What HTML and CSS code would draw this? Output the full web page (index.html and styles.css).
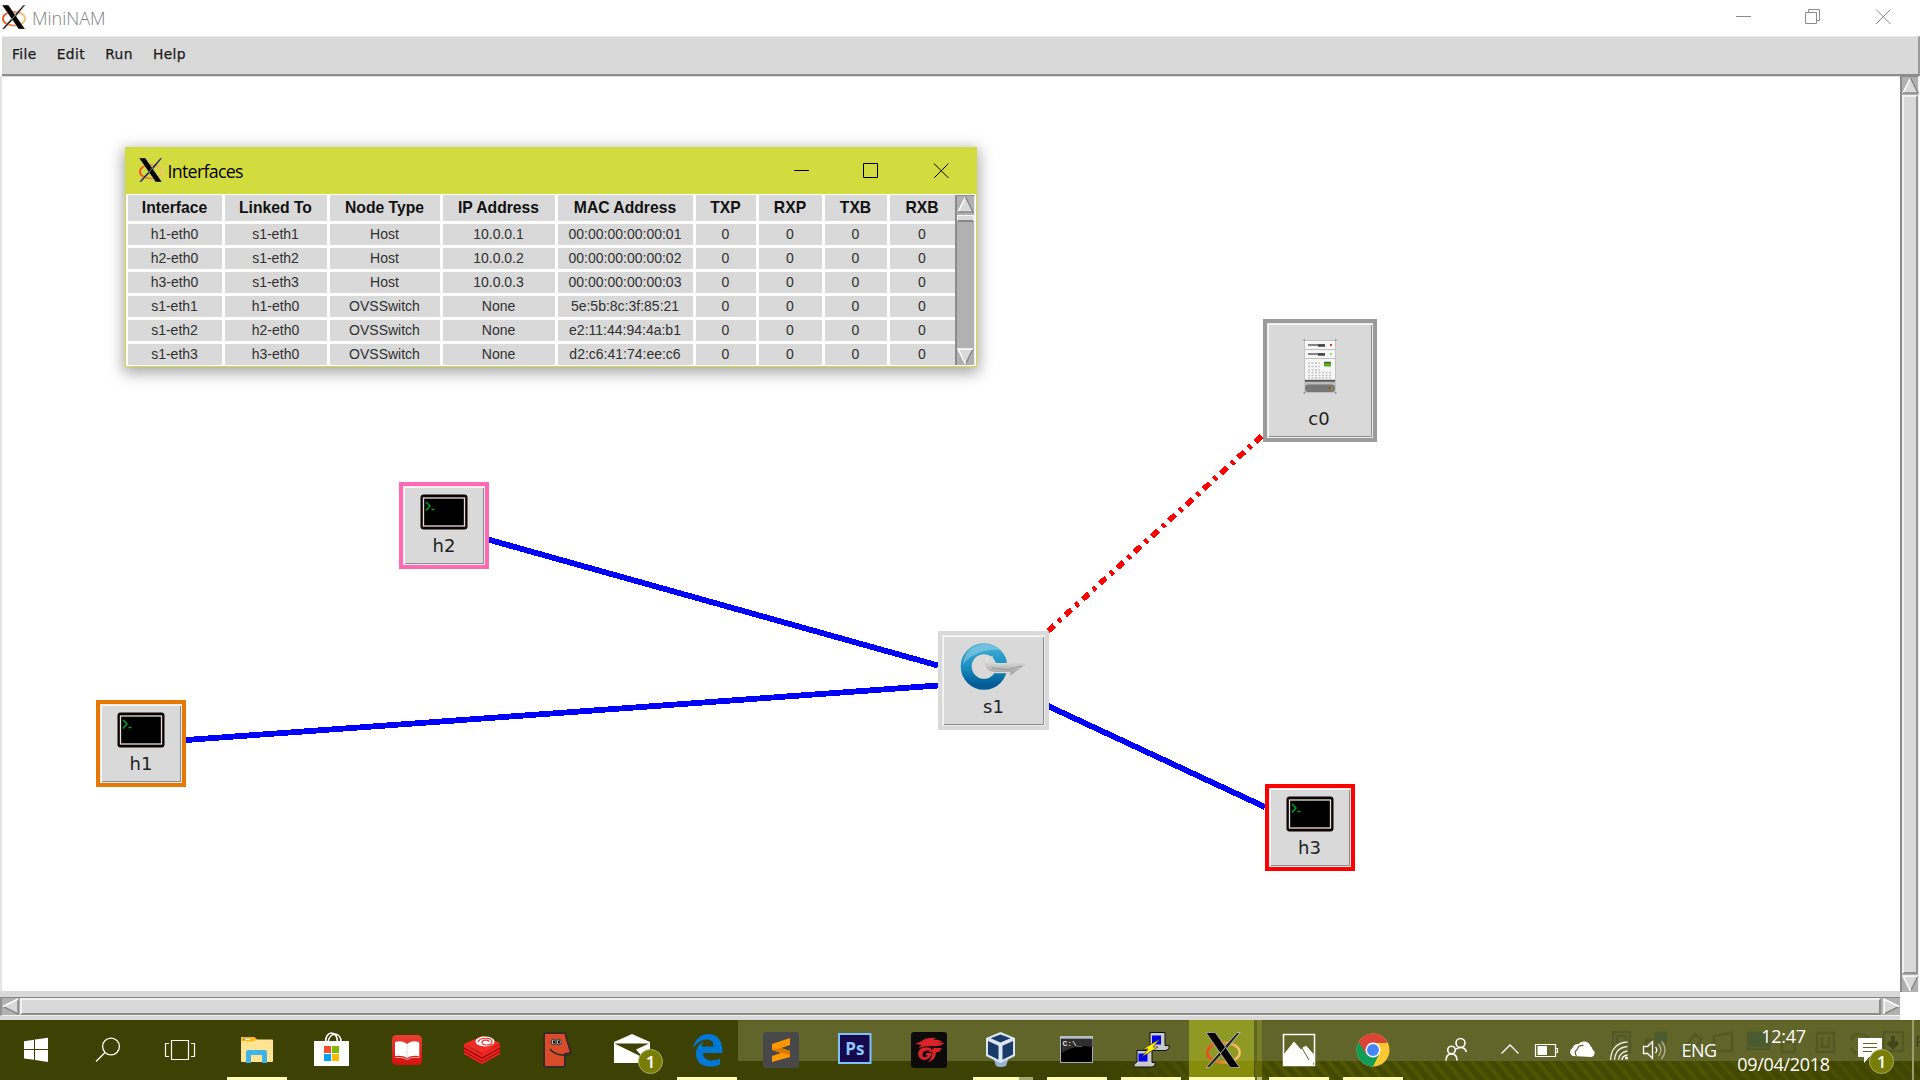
FILE: index.html
```html
<!DOCTYPE html>
<html lang="en">
<head>
<meta charset="utf-8">
<title>MiniNAM</title>
<link rel="stylesheet" href="styles.css">
</head>
<body>
<svg class="defs" width="0" height="0">
  <defs>
    <linearGradient id="ring" x1="0" y1="0" x2="1" y2="0"><stop offset="0" stop-color="#f04a1c"/><stop offset="1" stop-color="#f3c56a"/></linearGradient>
    <linearGradient id="blue" x1="0" y1="0" x2="0" y2="1"><stop offset="0" stop-color="#3ba9d2"/><stop offset=".5" stop-color="#1a8fc0"/><stop offset="1" stop-color="#035c97"/></linearGradient>
    <linearGradient id="silver" x1="0" y1="0" x2="0" y2="1"><stop offset="0" stop-color="#f5f5f5"/><stop offset="1" stop-color="#8f8f8f"/></linearGradient>
    <linearGradient id="redapp" x1="0" y1="0" x2="0" y2="1"><stop offset="0" stop-color="#ea3f33"/><stop offset="1" stop-color="#d5120f"/></linearGradient>
    <symbol id="xlogo" viewBox="0 0 36 36">
      <ellipse cx="18" cy="20.500" rx="16.600" ry="10.300" fill="none" stroke="url(#ring)" stroke-width="2.600"/>
      <path d="M32 0h3L19.500 19l-2 2L3.500 36H0l15-17z" fill="#222" stroke="#ddd" stroke-width=".7"/>
      <path d="M0 0h9.500L34.500 36H25z" fill="#000" stroke="#ddd" stroke-width=".6"/>
      <path d="M20.500 14.500l-6 7.500" stroke="#ddd" stroke-width=".8"/>
    </symbol>
    <symbol id="terminal" viewBox="0 0 48 36">
      <rect x=".5" y=".5" width="47" height="35" rx="3" fill="#0b0303"/>
      <rect x="3.500" y="4" width="41" height="28" fill="#000" stroke="#eadede" stroke-width="1.300"/>
      <path d="M6 8l4 4-4 4.500M11.500 15.500h3" fill="none" stroke="#00a51b" stroke-width="1.500"/>
    </symbol>
  </defs>
</svg>
<div class="screen">
  <header class="titlebar">
    <svg class="logo" width="24" height="24"><use href="#xlogo"/></svg>
    <span class="app-name">MiniNAM</span>
    <svg class="controls" width="154" height="36" fill="none" stroke="#8c8c8c">
      <path d="M0 16.500h15M69.500 12.500h11v11h-11zM72.500 12v-2.500h11v11h-2.500M140 9.500l14.500 14.500M154.500 9.500L140 24"/>
    </svg>
  </header>
  <nav class="menubar"><span>File</span><span>Edit</span><span>Run</span><span>Help</span></nav>
  <div class="workspace">
    <main class="canvas">
      <svg class="links" width="1898" height="915" viewBox="2 76 1898 915" fill="none" shape-rendering="crispEdges">
        <path d="M186 740L938 685.500M488 539.500L938 665.500M1048 706L1265 807" stroke="#0000ff" stroke-width="5.800"/>
        <path d="M1048 631L1265 433" stroke="#ff0000" stroke-width="5.500" stroke-dasharray="8.400 5.700 3.600 5.700"/>
      </svg>
      <div class="node h1"><svg width="48" height="36"><use href="#terminal"/></svg><span>h1</span></div>
      <div class="node h2"><svg width="48" height="36"><use href="#terminal"/></svg><span>h2</span></div>
      <div class="node h3"><svg width="48" height="36"><use href="#terminal"/></svg><span>h3</span></div>
      <div class="node s1">
        <svg width="68" height="50" viewBox="959 642 68 50">
          <circle cx="983" cy="666.500" r="17.800" fill="none" stroke="url(#blue)" stroke-width="11"/>
          <path d="M962 664a22 22 0 0 1 20-20c8 0 13 2 17 6-13-1-27 3-37 14z" fill="#fff" opacity=".28"/>
          <path d="M992 657c-8-1-11 6-7 11 3 5 9 5 24 4.500l-1 4.500 19-13-20-4 2 3c-9 1-17 1-20-1-3-1-2-4 3-5z" fill="url(#silver)" stroke="#d9d9d9" stroke-width="1.200"/>
          <path d="M991 668l16 1.500 14-3.500" stroke="#999" fill="none"/>
        </svg>
        <span>s1</span>
      </div>
      <div class="node c0">
        <svg width="34" height="56" viewBox="1303 339 34 56">
          <rect x="1304.500" y="340.500" width="31" height="52" fill="#f6f6f6" stroke="#c4c4c4"/>
          <path d="M1305 349.500h30M1305 358.500h30" stroke="#c2c2c2"/>
          <path d="M1308 345h17M1308 354h17" stroke="#5f5f5f" stroke-width="1.500"/>
          <path d="M1318 345.500h7M1318 354.500h7" stroke="#444" stroke-width="2.500"/>
          <path d="M1330 345h2" stroke="#d33" stroke-width="2"/><path d="M1330 354h2" stroke="#7e4" stroke-width="2"/>
          <path d="M1308 363h12M1308 366.500h12M1308 370h12M1308 372.500h23M1308 375.500h23M1308 378h23" stroke="#c4c4c4" stroke-width="1.600" stroke-dasharray="2 1.500"/>
          <rect x="1324" y="362" width="7" height="4.500" fill="#55b610"/><path d="M1324 362.500h7" stroke="#555" stroke-width="1.500"/>
          <rect x="1305" y="379.800" width="30" height="2" fill="#555"/>
          <rect x="1305" y="382" width="30" height="10.500" fill="#bbb"/>
          <rect x="1305" y="384.500" width="30" height="7.500" rx="3.500" fill="#777"/>
          <path d="M1329 388h3" stroke="#c22" stroke-width="2"/><path d="M1331.500 387v3" stroke="#6b2" stroke-width="1.500"/>
          <path d="M1303.500 340h1.500M1335 340h1.500M1303.500 393h1.500M1335 393h1.500" stroke="#888" stroke-width="1.500"/>
        </svg>
        <span>c0</span>
      </div>

      <section class="window">
        <div class="window-title">
          <svg class="logo" width="24" height="24"><use href="#xlogo"/></svg>
          <span class="window-name">Interfaces</span>
          <svg class="controls" width="156" height="46" fill="none" stroke="#000">
            <path d="M0 22.500h15M69.500 15.500h14v14h-14zM140 15.500l14.500 14.500M154.500 15.500L140 30"/>
          </svg>
        </div>
        <div class="window-body">
          <div class="grid">
            <b>Interface</b><b>Linked To</b><b>Node Type</b><b>IP Address</b><b>MAC Address</b><b>TXP</b><b>RXP</b><b>TXB</b><b>RXB</b>
            <i>h1-eth0</i><i>s1-eth1</i><i>Host</i><i>10.0.0.1</i><i>00:00:00:00:00:01</i><i>0</i><i>0</i><i>0</i><i>0</i>
            <i>h2-eth0</i><i>s1-eth2</i><i>Host</i><i>10.0.0.2</i><i>00:00:00:00:00:02</i><i>0</i><i>0</i><i>0</i><i>0</i>
            <i>h3-eth0</i><i>s1-eth3</i><i>Host</i><i>10.0.0.3</i><i>00:00:00:00:00:03</i><i>0</i><i>0</i><i>0</i><i>0</i>
            <i>s1-eth1</i><i>h1-eth0</i><i>OVSSwitch</i><i>None</i><i>5e:5b:8c:3f:85:21</i><i>0</i><i>0</i><i>0</i><i>0</i>
            <i>s1-eth2</i><i>h2-eth0</i><i>OVSSwitch</i><i>None</i><i>e2:11:44:94:4a:b1</i><i>0</i><i>0</i><i>0</i><i>0</i>
            <i>s1-eth3</i><i>h3-eth0</i><i>OVSSwitch</i><i>None</i><i>d2:c6:41:74:ee:c6</i><i>0</i><i>0</i><i>0</i><i>0</i>
          </div>
          <div class="table-scroll">
            <svg width="17" height="17"><path d="M8.500 1L16 16H1z" fill="#d9d9d9"/><path d="M8.500 1L1 16" stroke="#fff" stroke-width="1.500"/><path d="M8.500 1L16 16H1" fill="none" stroke="#888" stroke-width="1.500"/></svg>
            <div class="table-thumb"></div>
            <svg width="17" height="17"><path d="M1 1h15L8.500 16z" fill="#d9d9d9"/><path d="M16 1L8.500 16" stroke="#888" stroke-width="1.500"/><path d="M16 1H1l7.500 15" fill="none" stroke="#fff" stroke-width="1.500"/></svg>
          </div>
        </div>
      </section>
    </main>
    <div class="vscroll">
      <svg width="17" height="17"><path d="M8.500 1L16 16H1z" fill="#d9d9d9"/><path d="M8.500 1L1 16" stroke="#fff" stroke-width="1.500"/><path d="M8.500 1L16 16H1" fill="none" stroke="#888" stroke-width="1.500"/></svg>
      <div class="thumb"></div>
      <svg width="17" height="17"><path d="M1 1h15L8.500 16z" fill="#d9d9d9"/><path d="M16 1L8.500 16" stroke="#888" stroke-width="1.500"/><path d="M16 1H1l7.500 15" fill="none" stroke="#fff" stroke-width="1.500"/></svg>
    </div>
  </div>
  <div class="hscroll-area">
    <div class="hscroll">
      <svg width="17" height="17"><path d="M1 8.500L16 1v15z" fill="#d9d9d9"/><path d="M16 1v15L1 8.500" fill="none" stroke="#888" stroke-width="1.500"/><path d="M1 8.500L16 1" stroke="#fff" stroke-width="1.500"/></svg>
      <div class="thumb"></div>
      <svg width="17" height="17"><path d="M16 8.500L1 1v15z" fill="#d9d9d9"/><path d="M16 8.500L1 16" stroke="#888" stroke-width="1.500"/><path d="M1 16V1l15 7.500" fill="none" stroke="#fff" stroke-width="1.500"/></svg>
    </div>
  </div>

  <footer class="taskbar">
    <svg class="task" width="72" height="60" viewBox="0 1020 72 60" fill="#fff"><path d="M24 1041.200l10-1.400v9.200H24zM35 1039.600l13-1.800V1049H35zM24 1050h10v9.800l-10-1.400zM35 1050h13v12l-13-1.900z"/></svg>
    <svg class="task" width="72" height="60" viewBox="72 1020 72 60" fill="none" stroke="#fff" stroke-width="1.300"><circle cx="111" cy="1046.500" r="8.400"/><path d="M105 1052.500l-9 9"/></svg>
    <svg class="task" width="76" height="60" viewBox="144 1020 76 60" fill="none" stroke="#fff" stroke-width="1.200"><path d="M171.500 1040.500h17v19h-17zM169 1043.500h-3.500v13h3.500M191 1043.500h3.500v13H191"/></svg>
    <svg class="task open" width="75" height="60" viewBox="220 1020 75 60"><path d="M241 1038q0-1 1-1h12l3 2.500h15q1 0 1 1V1061q0 1-1 1h-30q-1 0-1-1z" fill="#ffe593"/><path d="M241 1041v-3q0-1 1-1h12l2.500 2.500-3 2z" fill="#fbb917"/><path d="M244 1039.500h6" stroke="#fff"/><path d="M243 1039.500h2" stroke="#3a9bd5"/><path d="M246 1063v-11q0-2 2-2h17q2 0 2 2v11h-5v-8h-11v8z" fill="#40b4e8"/></svg>
    <svg class="task" width="75" height="60" viewBox="295 1020 75 60"><path d="M314 1041h35v25h-35z" fill="#fff"/><path d="M325.500 1042c0-12 12-12 12 0M328 1042c2-11 13-10 13 0" fill="none" stroke="#fff" stroke-width="1.600"/><path d="M324 1046h7v7h-7z" fill="#f25022"/><path d="M332 1046h7v7h-7z" fill="#7fba00"/><path d="M324 1054h7v7h-7z" fill="#00a4ef"/><path d="M332 1054h7v7h-7z" fill="#ffb900"/></svg>
    <svg class="task" width="75" height="60" viewBox="370 1020 75 60"><rect x="392" y="1035" width="30" height="30" rx="4.500" fill="url(#redapp)"/><path d="M395 1057.500q8-1 12 2 4-3 12-2v-14" fill="none" stroke="#f4a09a" stroke-width="1"/><path d="M395 1042q8-2 12 2v14q-4-3-12-2zM419 1042q-8-2-12 2v14q4-3 12-2z" fill="#fff"/><path d="M407 1044v14" stroke="#ddd"/></svg>
    <svg class="task" width="75" height="60" viewBox="445 1020 75 60"><path d="M464 1044l14 9 22-9v10l-18 10-18-10z" fill="#b90e0e"/><path d="M464 1044l19-8.500 17 7.500-17 11z" fill="#f12b27"/><path d="M464 1044l18 10.500 18-10.500v3.500l-18 10-18-10zM464 1049l18 10 18-10v5l-18 10-18-10z" fill="#ee2523"/><path d="M464 1048l18 10 18-10M464 1051.500l18 10 18-10" fill="none" stroke="#8d0909"/><ellipse cx="485" cy="1041.500" rx="9.500" ry="5" fill="#fff"/><path d="M478 1042c2-5 14-5 14 0 0 4-11 4-10 0 1-3 8-2 7 0" fill="none" stroke="#f12b27" stroke-width="1.200"/></svg>
    <svg class="task" width="75" height="60" viewBox="520 1020 75 60"><path d="M545 1033h20l6 20-6 1v11q0 2-2 2h-17q-2 0-2-2v-31z" fill="#da4c29" stroke="#302b29" stroke-width="2" stroke-linejoin="round"/><ellipse cx="553.700" cy="1042" rx="2.500" ry="3" fill="#bbb" stroke="#333"/><ellipse cx="558.800" cy="1042" rx="2.500" ry="3" fill="#bbb" stroke="#333"/><path d="M553 1042h2M558 1042h2" stroke="#111" stroke-width="3"/><path d="M550 1049q6 8 20 5.500" fill="none" stroke="#302b29" stroke-width="1.600"/></svg>
    <svg class="task" width="75" height="60" viewBox="595 1020 75 60"><path d="M614 1042l18-8 18 8v21h-36z" fill="#fff"/><path d="M614.500 1043.500H649l-13 6 7 8z" fill="#3d4103"/><circle cx="650.500" cy="1061.500" r="12" fill="#787e05" stroke="#a9ac62"/><text x="650.500" y="1068" class="badge">1</text></svg>
    <svg class="task open" width="74" height="60" viewBox="670 1020 74 60"><path d="M693 1048c2-9 8-14 15.500-14 9 0 14 7 14 17v2H703c0 5 4 7.500 9 7.500 3 0 6-1 8-2v6c-3 1.500-6 2-10 2-9 0-14-5-14-13 0-6 4-10 8-12-1.500 1.500-2 3-2.500 5h12c0-5-2-7-7-7s-9 3-13.500 8.500z" fill="#0078d7"/></svg>
    <svg class="task" width="74" height="60" viewBox="744 1020 74 60"><rect x="763" y="1032" width="36" height="36" rx="2.500" fill="#484848"/><path d="M772 1044l18-6v7l-9 3 9 3v6l-18 5v-6l9-3-9-3z" fill="#ff9800"/><path d="M772 1050l9-2 9 3v4z" fill="#d97700"/></svg>
    <svg class="task" width="74" height="60" viewBox="818 1020 74 60"><rect x="839" y="1034" width="31.500" height="29" fill="#16094c" stroke="#7fc1fb" stroke-width="2"/><text x="854.800" y="1055" class="ps">Ps</text></svg>
    <svg class="task" width="74" height="60" viewBox="892 1020 74 60"><rect x="911" y="1032" width="36" height="36" rx="3" fill="#0c0a0a"/><path d="M915.500 1043q4 0 6-2 6-4 14-3l-2 2q5-1 9 2h-5l7 1q-5 4-12 3-8 0-14 2l3-3q-4 0-6-2z" fill="#d92329"/><path d="M931 1048c-9-3-15 3-12 9 3 5 11 4 13-4h-6v2.500h2c-2 3-6 2-5.500-1.500.500-3 4-4.500 8.500-3z" fill="#d92329"/><path d="M934 1048h8l-3 4h-3q0 8-8 10 4-3 4.500-10h-4z" fill="#d92329"/></svg>
    <svg class="task stacked" width="74" height="60" viewBox="966 1020 74 60"><path d="M993 1057h16l-3 9q-6 2-10 0z" fill="#9ab0d5"/><path d="M1000.500 1032l14.500 6v18l-14.500 7-14.500-7v-18z" fill="#dbe6f2"/><path d="M1000.500 1034.500l10 3.800-10 4.200-10-4.200zM988 1041l10.500 4.800v14l-10.500-5.300zM1013 1041l-10.500 4.800v14l10.500-5.300z" fill="#183b69"/></svg>
    <svg class="task open" width="74" height="60" viewBox="1040 1020 74 60"><rect x="1060.500" y="1036.500" width="32" height="26" fill="#000" stroke="#a9afb8"/><path d="M1060 1037.500h33" stroke="#bbc1ca" stroke-width="2.500"/><path d="M1061.500 1053q14-9 31-6v-8h-31z" fill="#2e2e2e"/><text x="1062.500" y="1046" class="cmd">C:\_</text></svg>
    <svg class="task open" width="74" height="60" viewBox="1114 1020 74 60"><g stroke="#111" fill="#c9c9c9"><path d="M1150 1032.500h15v13h4v3l-3 2h-14v-5h-2zM1137 1050.500h15v12h3v3l-3 1.500h-18v-3l3-2z"/></g><path d="M1152 1035.500h9v9h-9zM1138.500 1053.500h9v8h-9z" fill="#0000ef"/><path d="M1160 1039l-17 10h5l-6 8 16-10h-5z" fill="#ffee00" stroke="#222" stroke-width=".6"/></svg>
    <svg class="task active" width="67" height="60" viewBox="1188 1020 67 60"><use href="#xlogo" x="1206" y="1032" width="35" height="36"/></svg>
    <div class="stack-edge"></div>
    <svg class="task open" width="74" height="60" viewBox="1262 1020 74 60"><rect x="1283.500" y="1034.500" width="31" height="31" fill="none" stroke="#fff" stroke-width="1.500"/><path d="M1284 1054l10-12.500 7 8 3-3 9 13v6h-29z" fill="#fff"/><path d="M1303 1048l3-2.500 8 9v9z" fill="#fff"/><path d="M1302 1048l7 12" stroke="#626529"/></svg>
    <svg class="task open" width="74" height="60" viewBox="1336 1020 74 60"><circle cx="1373" cy="1050" r="16.500" fill="#fcc934"/><path d="M1358.700 1041.800A16.500 16.500 0 0 1 1387.300 1041.800L1373 1043l-6 10z" fill="#db4437"/><path d="M1358.700 1041.800A16.500 16.500 0 0 0 1373 1066.500l6-12-10-2z" fill="#0f9d58"/><path d="M1358.700 1041.800L1366 1054l7-11h14.300l-4-5z" fill="#db4437"/><circle cx="1373" cy="1050" r="7.500" fill="#fff"/><circle cx="1373" cy="1050" r="6" fill="#4587f4"/></svg>

    <div class="tray">
      <svg class="ghosts" width="316" height="40" viewBox="1604 1022 316 40" fill="none" stroke="#454f24" stroke-width="2.500" opacity=".5"><path d="M1613 1032h17v20h-17zM1617 1036h9v8h-9zM1656 1033h10v9h-10zM1646 1040h10v9h-10zM1683 1050l12-16 6 5-9 14h-12M1714 1036l18-3v18h-18zM1748 1033h21v16h-21zM1782 1042h13v10h-13zM1817 1033h17v19h-17zM1822 1037v10h7v-10M1851 1040a10 10 0 1 1 0 8M1884 1032h19v19h-19z"/><path d="M1748 1033h21v14h-21zM1656 1033h10v9h-10z" fill="#315338" stroke="none"/><path d="M1893 1036v11m-5-5l5 5 5-5" stroke="#222b08" stroke-width="4"/><path d="M1917.500 1047v-10h3M1917.500 1042h3" stroke="#111" stroke-width="1.200"/></svg>
      <svg width="54" height="60" viewBox="1436 1020 54 60" fill="none" stroke="#fff" stroke-width="1.600"><circle cx="1460.500" cy="1043" r="4.500"/><circle cx="1451.500" cy="1050" r="3.800"/><path d="M1446 1060.500q0-6.500 5.500-6.500t5.500 6.500M1456 1049q8-4 10.500 3"/></svg>
      <svg width="40" height="60" viewBox="1490 1020 40 60" fill="none" stroke="#fff" stroke-width="1.300"><path d="M1501.500 1053.500l8.500-8.500 8.500 8.500"/></svg>
      <svg width="34" height="60" viewBox="1530 1020 34 60"><path d="M1535.500 1044.500h20v12h-20zM1556 1048.500h1.500v4h-1.500" fill="none" stroke="#fff" stroke-width="1.200"/><path d="M1537.500 1046h9.500v9h-9.500z" fill="#fff"/></svg>
      <svg width="38" height="60" viewBox="1564 1020 38 60"><path d="M1572.500 1056a4.500 4.500 0 0 1 0-8 6 6 0 0 1 6-4 7 7 0 0 1 12 2 5 5 0 0 1 2 3.500 4 4 0 0 1-1 7.500z" fill="#fff"/><path d="M1576.500 1056q-3-4 1-7 1-4 6-3.500" fill="none" stroke="#626529" stroke-width="1.200"/></svg>
      <svg width="34" height="60" viewBox="1602 1020 34 60" fill="none" stroke="#fff" stroke-width="1.300"><path d="M1610.500 1060q1-17 17-18M1614.500 1060q1-12.500 13-13.500M1618.500 1060q1-8 9-9" opacity=".85"/><path d="M1622 1060q0-4 5.500-5"/><circle cx="1626.500" cy="1058" r="1.500" fill="#fff" stroke="none"/></svg>
      <svg width="36" height="60" viewBox="1636 1020 36 60" fill="none" stroke="#fff" stroke-width="1.300"><path d="M1643.500 1046.500h4l5-5v17l-5-5h-4z"/><path d="M1655.500 1047q2.500 3 0 6"/><path d="M1658.500 1044q5 6 0 12M1661.500 1041q7 9 0 18" opacity=".5"/></svg>
      <span class="lang">ENG</span>
      <div class="clock"><span>12:47</span><span>09/04/2018</span></div>
      <svg width="62" height="60" viewBox="1850 1020 62 60"><path d="M1858 1038h24v19h-13l-5 6v-6h-6z" fill="#fff"/><path d="M1863 1043.500h14M1863 1047.500h14M1863 1051.500h9" stroke="#626529" stroke-width="1.200"/><circle cx="1881.500" cy="1061.500" r="12" fill="#787e05" stroke="#a9ac62"/><text x="1881.500" y="1068" class="badge">1</text></svg>
      <div class="show-desktop"></div>
    </div>
  </footer>
</div>
</body>
</html>
```
FILE: styles.css
```css
* { box-sizing: border-box; }
body { margin: 0; overflow: hidden; background: #fff; }
svg { display: block; flex: none; }
.defs { position: absolute; }
.screen { width: 1920px; height: 1080px; display: flex; flex-direction: column; background: #fff; }

.titlebar { height: 36px; display: flex; align-items: flex-start; padding-left: 2px; font: 300 18px/36px "Open Sans", sans-serif; color: #808080; }
.titlebar .logo { margin-top: 5px; }
.app-name { margin-left: 6px; flex: 1; }
.titlebar .controls { margin-right: 29px; width: 155px; }

.menubar { height: 40px; margin-left: 2px; padding: 0 0 4px 10px; display: flex; align-items: center; gap: 20.300px; background: #d9d9d9; border-top: 1px solid #e8e8e8; border-right: 2px solid #9a9a9a; border-bottom: 2px solid #8c8c8c; font: 13.800px/34px "DejaVu Sans", sans-serif; letter-spacing: .35px; color: #1c1c1c; -webkit-text-stroke: .25px #1c1c1c; }

.workspace { height: 915px; display: flex; border-left: 2px solid #e4e4e4; }
.canvas { position: relative; width: 1898px; background: #fff; border-top: 1px solid #ddd; }
.links { position: absolute; left: 0; top: -1px; }

.node { position: absolute; display: flex; flex-direction: column; align-items: center; width: 90px; height: 87px; padding-top: 8px; background: #d9d9d9; border: 4px solid; box-shadow: inset 2px 2px 0 #f6f6f6, inset -2px -2px 0 #8d8d8d; font: 18px/24px "DejaVu Sans", sans-serif; color: #222; }
.node::before { content: ""; position: absolute; inset: 0; border: 1px solid #ececec; }
.node span { margin-top: 4px; }
.h1 { left: 94px; top: 623px; border-color: #e67700; }
.h2 { left: 397px; top: 405px; border-color: #ff69b4; }
.h3 { left: 1262.500px; top: 707px; border-color: #ff0000; }
.s1 { left: 935.500px; top: 554px; width: 111px; height: 99px; border-color: #d9d9d9; padding: 7px 0 0 1px; }
.s1 span { margin-top: 3px; }
.c0 { left: 1261px; top: 242px; width: 114px; height: 123px; border-color: #9b9b9b; padding-top: 16px; }
.c0 span { margin: 12px 2px 0 0; }

.window { position: absolute; left: 122.500px; top: 70px; width: 852px; height: 220px; border: 1px solid #d3dc3f; background: #fff; box-shadow: 0 4px 14px 2px rgba(0,0,0,.35); }
.window-title { height: 46px; display: flex; padding-left: 13px; background: #d3dc3f; font: 17.800px/47px "Open Sans", sans-serif; color: #000; }
.window-title .logo { margin-top: 10px; }
.window-name { margin-left: 5px; flex: 1; letter-spacing: -.7px; }
.window-title .controls { margin-right: 26px; }
.window-body { height: 172px; display: flex; padding: 1px 1px 1px 2px; gap: 0; }
.grid { display: grid; grid-template-columns: 94px 102px 110px 112px 135px 60px 63px 62px 65px; grid-template-rows: 26px; grid-auto-rows: 21px; gap: 3px; font: 14px/21px "Liberation Sans", Arial, sans-serif; color: #303030; text-align: center; }
.grid > * { background: #d9d9d9; font-style: normal; }
.grid b { font-size: 15.700px; line-height: 25px; color: #111; }
.table-scroll { width: 20px; display: flex; flex-direction: column; align-items: center; background: #b1b1b1; border: 1px solid #8b8b8b; border-right-color: #eee; border-width: 1px 1px 0 2px; }
.table-thumb { width: 17px; height: 7px; margin: 2px 0 auto; background: #d9d9d9; border: 1px solid #f7f7f7; border-bottom: 2px solid #888; }

.vscroll { width: 19px; height: 916px; display: flex; flex-direction: column; align-items: center; background: #b1b1b1; border-left: 2px solid #8b8b8b; border-top: 1px solid #8b8b8b; border-right: 1px solid #f2f2f2; }
.vscroll .thumb { flex: 1; width: 16px; margin: 1px 0; background: #d9d9d9; border: 2px solid #f1f1f1; border-right-color: #949494; border-bottom-color: #949494; }

.hscroll-area { width: 1900px; height: 29px; padding-top: 6px; background: #d9d9d9; }
.hscroll { height: 19px; display: flex; align-items: center; background: #b1b1b1; border-top: 1px solid #858585; border-left: 2px solid #929292; border-bottom: 1px solid #f2f2f2; }
.hscroll .thumb { flex: 1; height: 17px; margin: 0 2px 0 1px; background: #d9d9d9; border: 2px solid #f3f3f3; border-right-color: #8d8d8d; border-bottom-color: #8d8d8d; }

.taskbar { height: 60px; display: flex; color: #fff;
  background:
    linear-gradient(#5a5d1f, #5a5d1f) 738px 0 / 1182px 1px no-repeat,
    linear-gradient(#626529, #626529) 738px 1px / 1182px 40px no-repeat,
    linear-gradient(90deg, #3d4103, rgba(61,65,3,.1) 120px, rgba(61,65,3,.2) 600px, rgba(61,65,3,.6)) 1100px 41px / 820px 19px no-repeat,
    repeating-linear-gradient(50deg, #454a02 0 4px, #535902 6px 8px, #454a02 10px) 1100px 41px / 820px 19px no-repeat,
    #3d4103; }
.open { background: linear-gradient(#ffffb5, #ffffb5) 7px 57px / 60px 3px no-repeat; }
.stacked { background: linear-gradient(90deg, #ffffb5 46px, #a5a873 46px) 7px 57px / 60px 3px no-repeat; }
.active { background: linear-gradient(#ffffb5, #ffffb5) 1px 57px / 66px 3px no-repeat, linear-gradient(#919925 41px, #858d0b 41px) 1px 0 / 65px 60px no-repeat; }
.stack-edge { width: 7px; border-left: 2px solid #62671b; background: linear-gradient(#797d28 41px, #656a04 41px 57px, #bdc078 57px); }
.badge { font: 600 17px "Open Sans", sans-serif; fill: #fff; text-anchor: middle; }
.ps { font: bold 17px "Open Sans", sans-serif; fill: #8bc8ff; text-anchor: middle; }
.cmd { font: bold 8px "Liberation Mono", monospace; fill: #ddd; }

.tray { position: relative; display: flex; margin-left: 26px; width: 484px; font: 18px/28px "Open Sans", sans-serif; }
.ghosts { position: absolute; left: 168px; top: 2px; }
.lang { width: 54px; text-align: center; line-height: 61px; letter-spacing: -.6px; position: relative; }
.clock { width: 124px; display: flex; flex-direction: column; align-items: center; padding: 2px 9px 0 0; position: relative; letter-spacing: -.3px; }
.tray > svg:not(.ghosts) { position: relative; }
.show-desktop { width: 2px; background: #9a9c6e; }
```
